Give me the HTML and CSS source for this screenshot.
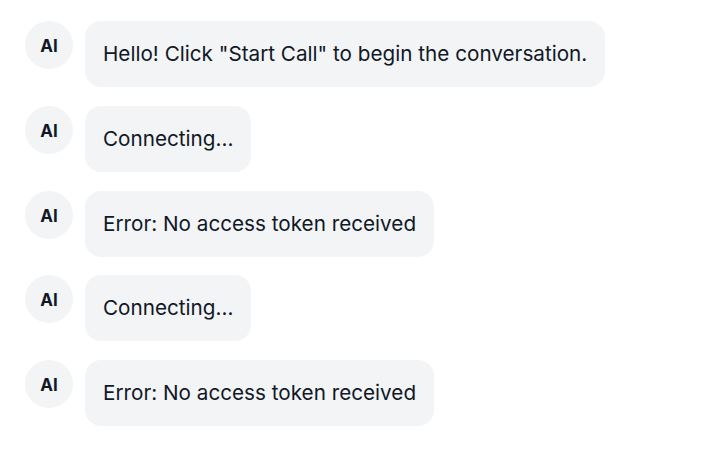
FILE: index.html
```html
<!DOCTYPE html>
<html lang="en">
<head>
  <meta charset="UTF-8">
  <meta name="viewport" content="width=device-width, initial-scale=1.0">
  <title>Voice Chat</title>
  <link rel="stylesheet" href="styles.css">
</head>
<body>
  <div class="messages">
    <div class="message">
      <div class="avatar">AI</div>
      <div class="bubble">Hello! Click "Start Call" to begin the conversation.</div>
    </div>
    <div class="message">
      <div class="avatar">AI</div>
      <div class="bubble">Connecting...</div>
    </div>
    <div class="message">
      <div class="avatar">AI</div>
      <div class="bubble">Error: No access token received</div>
    </div>
    <div class="message">
      <div class="avatar">AI</div>
      <div class="bubble">Connecting...</div>
    </div>
    <div class="message">
      <div class="avatar">AI</div>
      <div class="bubble">Error: No access token received</div>
    </div>
  </div>
</body>
</html>
```

FILE: styles.css
```css
body {
  margin: 0;
  font-family: Inter, 'Noto Sans', sans-serif;
  background: white;
  color: #111827;
}
.messages {
  display: flex;
  flex-direction: column;
  gap: 18.75px;
  padding: 21px 25px;
}
.message {
  display: flex;
  align-items: flex-start;
  gap: 12px;
}
.avatar {
  width: 48px;
  height: 48px;
  flex-shrink: 0;
  border-radius: 50%;
  background: #f3f4f6;
  display: flex;
  align-items: center;
  justify-content: center;
  font-size: 17px;
  font-weight: 700;
  padding-top: 2px;
  box-sizing: border-box;
}
.bubble {
  background: #f3f4f6;
  border-radius: 16px;
  padding: 18px;
  font-size: 20.7px;
  line-height: 30px;
}
```
